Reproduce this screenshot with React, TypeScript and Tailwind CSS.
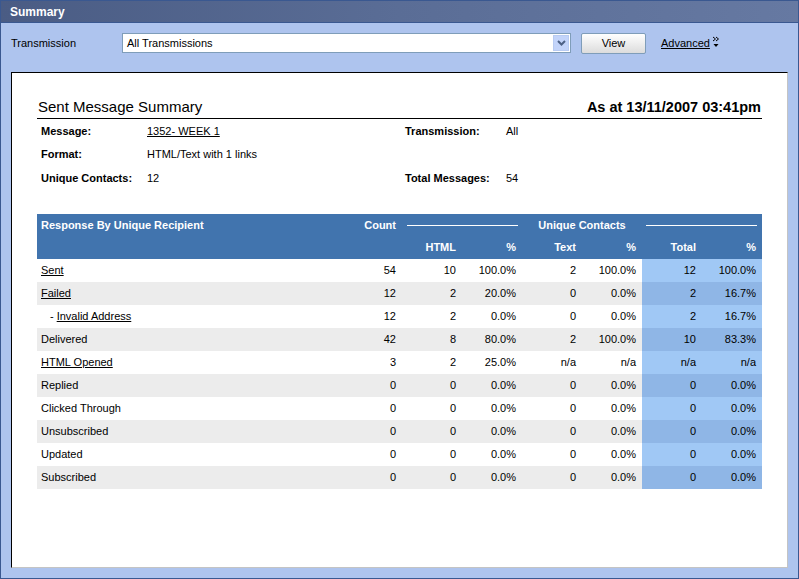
import React from 'react';

type Row = {
  label: string;
  link?: boolean;
  indent?: boolean;
  cells: string[];
};

const rows: Row[] = [
  { label: 'Sent', link: true, cells: ['54', '10', '100.0%', '2', '100.0%', '12', '100.0%'] },
  { label: 'Failed', link: true, cells: ['12', '2', '20.0%', '0', '0.0%', '2', '16.7%'] },
  { label: 'Invalid Address', link: true, indent: true, cells: ['12', '2', '0.0%', '0', '0.0%', '2', '16.7%'] },
  { label: 'Delivered', cells: ['42', '8', '80.0%', '2', '100.0%', '10', '83.3%'] },
  { label: 'HTML Opened', link: true, cells: ['3', '2', '25.0%', 'n/a', 'n/a', 'n/a', 'n/a'] },
  { label: 'Replied', cells: ['0', '0', '0.0%', '0', '0.0%', '0', '0.0%'] },
  { label: 'Clicked Through', cells: ['0', '0', '0.0%', '0', '0.0%', '0', '0.0%'] },
  { label: 'Unsubscribed', cells: ['0', '0', '0.0%', '0', '0.0%', '0', '0.0%'] },
  { label: 'Updated', cells: ['0', '0', '0.0%', '0', '0.0%', '0', '0.0%'] },
  { label: 'Subscribed', cells: ['0', '0', '0.0%', '0', '0.0%', '0', '0.0%'] },
];

export default function App() {
  return (
    <div className="w-[799px] h-[579px] flex flex-col border border-[#3a5890] bg-[#aec4ee] text-[11px] text-black font-['Liberation_Sans',Arial,sans-serif]">
      <TitleBar />
      <Toolbar />
      <main className="flex-1 mx-[10px] mb-[10px] bg-white border-l border-t border-black border-r border-b border-r-[#c4c4c4] border-b-[#c4c4c4] px-[25px] pt-[25px]">
        <div className="flex items-end justify-between border-b border-black pb-[2px] px-[1px]">
          <h2 className="text-[15px] leading-[18px]">Sent Message Summary</h2>
          <span className="text-[14.5px] font-bold leading-[18px]">As at 13/11/2007 03:41pm</span>
        </div>

        <div className="grid grid-cols-[106px_258px_101px_1fr] pl-[4px]">
          <InfoLabel>Message:</InfoLabel>
          <div className="h-[23.5px] flex items-center"><span className="underline">1352- WEEK 1</span></div>
          <InfoLabel>Transmission:</InfoLabel>
          <div className="h-[23.5px] flex items-center">All</div>

          <InfoLabel>Format:</InfoLabel>
          <div className="h-[23.5px] flex items-center">HTML/Text with 1 links</div>
          <div />
          <div />

          <InfoLabel>Unique Contacts:</InfoLabel>
          <div className="h-[23.5px] flex items-center">12</div>
          <InfoLabel>Total Messages:</InfoLabel>
          <div className="h-[23.5px] flex items-center">54</div>
        </div>

        <SummaryTable />
      </main>
    </div>
  );
}

function TitleBar() {
  return (
    <header className="h-[22px] flex items-center px-[9px] bg-gradient-to-r from-[#4a5c84] via-[#5a6d96] to-[#6679a2] border-b border-[#3a5890]">
      <h1 className="text-white font-bold text-[12px]">Summary</h1>
    </header>
  );
}

function Toolbar() {
  return (
    <div className="h-[49px] flex items-start pt-[10px] pl-[10px]">
      <label className="w-[111px] leading-[20px]">Transmission</label>
      <div className="w-[449px] h-[20px] bg-white border border-[#7f9db9] flex items-center justify-between pl-[4px] pr-[1px]">
        <span>All Transmissions</span>
        <span className="w-[16px] h-[16px] bg-[#c3d4fa] border border-[#b8cbf2] flex items-center justify-center">
          <svg width="9" height="6" viewBox="0 0 9 6">
            <path d="M1 1 L4.5 4.5 L8 1" fill="none" stroke="#4d6185" strokeWidth="2" />
          </svg>
        </span>
      </div>
      <button className="ml-[10px] w-[65px] h-[21px] border border-[#7f9db9] bg-gradient-to-b from-white to-[#dcdcdc] rounded-[2px]">
        View
      </button>
      <a className="ml-[15px] leading-[20px] underline">Advanced</a>
      <svg className="ml-[2px] mt-[3px]" width="8" height="12" viewBox="0 0 8 12">
        <path d="M1 1 L3.5 3 L1 5 M4 1 L6.5 3 L4 5" fill="none" stroke="#000" strokeWidth="1" />
        <path d="M1.5 8 L6.5 8 L4 11 Z" fill="#000" />
      </svg>
    </div>
  );
}

function InfoLabel({ children }: { children: React.ReactNode }) {
  return <div className="h-[23.5px] flex items-center font-bold">{children}</div>;
}

function SummaryTable() {
  const cols = 'grid grid-cols-[305px_60px_60px_60px_60px_60px_60px_60px]';
  return (
    <div className="mt-[24px] w-[725px]">
      <div className="bg-[#4174ae] text-white font-bold">
        <div className={cols + ' h-[23px] items-center'}>
          <div className="pl-[4px]">Response By Unique Recipient</div>
          <div className="text-right pr-[6px]">Count</div>
          <div className="col-span-6 flex items-center gap-[20px] px-[5px]">
            <div className="flex-1 h-px bg-white" />
            <span>Unique Contacts</span>
            <div className="flex-1 h-px bg-white" />
          </div>
        </div>
        <div className={cols + ' h-[22px] items-center'}>
          <div />
          <div />
          <div className="text-right pr-[6px]">HTML</div>
          <div className="text-right pr-[6px]">%</div>
          <div className="text-right pr-[6px]">Text</div>
          <div className="text-right pr-[6px]">%</div>
          <div className="text-right pr-[6px]">Total</div>
          <div className="text-right pr-[6px]">%</div>
        </div>
      </div>
      {rows.map((r, i) => {
        const odd = i % 2 === 1;
        return (
          <div key={r.label} className={cols + ' h-[23px] items-stretch ' + (odd ? 'bg-[#ececec]' : 'bg-white')}>
            <div className="flex items-center pl-[4px]">
              {r.indent && <span className="pl-[9px] pr-[3px]">-</span>}
              {r.link ? <span className="underline">{r.label}</span> : <span>{r.label}</span>}
            </div>
            {r.cells.map((c, j) => (
              <div
                key={j}
                className={
                  'flex items-center justify-end pr-[6px] ' +
                  (j >= 5 ? (odd ? 'bg-[#8fb6e6]' : 'bg-[#a0c8f5]') : '')
                }
              >
                {c}
              </div>
            ))}
          </div>
        );
      })}
    </div>
  );
}
